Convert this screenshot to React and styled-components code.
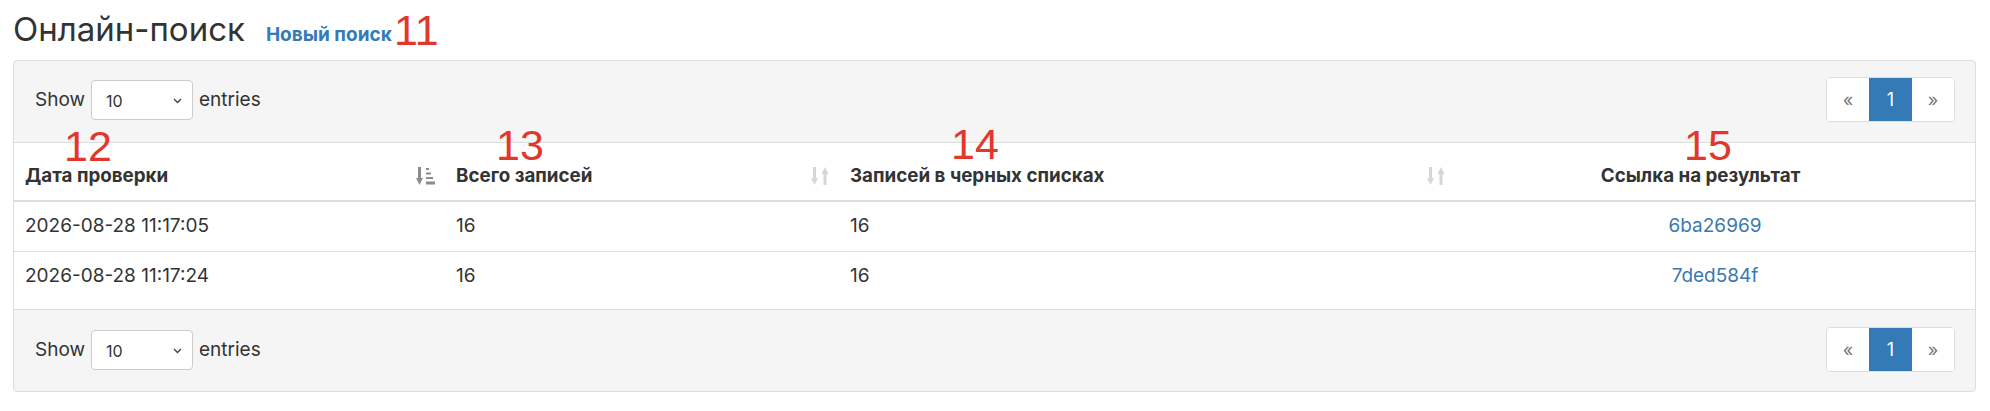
import React from "react";
import styled, { createGlobalStyle } from "styled-components";

const Global = createGlobalStyle`
  html, body { margin: 0; padding: 0; background: #fff; }
  body { font-family: Inter, "Noto Sans", sans-serif; color: #333; font-size: 19px; }
  * { box-sizing: border-box; }
`;

const Page = styled.div`
  position: relative;
  width: 1990px;
  height: 411px;
  padding: 9px 14px 0 13px;
`;

const Header = styled.div`
  display: flex;
  align-items: baseline;
  height: 40px;
  margin-bottom: 11px;
`;

const Title = styled.h1`
  margin: 0;
  font-size: 33px;
  line-height: 40px;
  font-weight: 400;
  color: #333;
`;

const NewLink = styled.a`
  margin-left: 21px;
  font-size: 19px;
  font-weight: 700;
  color: #337ab7;
  text-decoration: none;
`;

const Note = styled.span`
  position: absolute;
  left: ${(p) => p.$x}px;
  top: ${(p) => p.$y}px;
  font-family: "Liberation Sans", Arial, sans-serif;
  font-size: 43px;
  line-height: 1;
  color: #e2372b;
  pointer-events: none;
`;

const Panel = styled.div`
  border: 1px solid #ddd;
  border-radius: 4px;
  overflow: hidden;
  background: #f5f5f5;
`;

const Toolbar = styled.div`
  display: flex;
  justify-content: space-between;
  align-items: center;
  padding: ${(p) => (p.$bottom ? "17px 20px 19px 21px" : "16px 20px 20px 21px")};
  ${(p) => (p.$bottom ? "border-top: 1px solid #ddd;" : "border-bottom: 1px solid #ddd;")}
`;

const Length = styled.label`
  display: flex;
  align-items: center;
  gap: 6px;
  font-size: 19px;
  line-height: 26px;
  color: #333;
`;

const Select = styled.div`
  width: 102px;
  height: 40px;
  border: 1px solid #ccc;
  border-radius: 4px;
  background: #fff;
  display: flex;
  align-items: center;
  justify-content: space-between;
  padding: 2px 10px 0 14px;
  font-size: 16px;
  color: #333;
`;

const Pager = styled.div`
  display: flex;
  border: 1px solid #ddd;
  border-radius: 4px;
  overflow: hidden;
  background: #fff;
  height: 45px;
`;

const PageBtn = styled.span`
  width: ${(p) => (p.$active ? 43 : 42)}px;
  display: flex;
  align-items: center;
  justify-content: center;
  font-size: 18px;
  color: ${(p) => (p.$active ? "#fff" : "#777")};
  background: ${(p) => (p.$active ? "#337ab7" : "#fff")};
`;

const Body = styled.div`
  background: #fff;
  padding-bottom: 8px;
`;

const Table = styled.table`
  width: 100%;
  border-collapse: separate;
  border-spacing: 0;
  table-layout: fixed;
`;

const Th = styled.th`
  padding: 20px ${(p) => (p.$pr != null ? p.$pr : 10)}px 11px 11px;
  line-height: 26px;
  font-size: 18.8px;
  font-weight: 700;
  color: #333;
  text-align: ${(p) => p.$align || "left"};
  border-bottom: 2px solid #ddd;
  vertical-align: bottom;
`;

const ThInner = styled.div`
  display: flex;
  align-items: center;
  justify-content: space-between;
`;

const Td = styled.td`
  padding: 11px 12px 12px 11px;
  line-height: 26px;
  font-size: 19px;
  color: #333;
  text-align: ${(p) => p.$align || "left"};
  border-top: ${(p) => (p.$first ? "none" : "1px solid #ddd")};
`;

const ResultLink = styled.a`
  color: #3a78b0;
  text-decoration: none;
`;

const SortAmount = ({ color }) => (
  <svg width="19" height="18" viewBox="0 0 19 18">
    <rect x="2" y="0" width="3" height="12" fill={color} />
    <polygon points="0,11 7,11 3.5,18" fill={color} />
    <rect x="10" y="1" width="3" height="2" fill={color} />
    <rect x="10" y="5.5" width="5" height="2" fill={color} />
    <rect x="10" y="10" width="7" height="2" fill={color} />
    <rect x="10" y="14.5" width="9" height="3" fill={color} />
  </svg>
);

const SortBoth = ({ color }) => (
  <svg width="18" height="18" viewBox="0 0 18 18">
    <rect x="2" y="0" width="3" height="12" fill={color} />
    <polygon points="0,11 7,11 3.5,18" fill={color} />
    <rect x="12.5" y="6" width="3" height="12" fill={color} />
    <polygon points="10.5,7 17.5,7 14,0" fill={color} />
  </svg>
);

const Chevron = () => (
  <svg width="9" height="6" viewBox="0 0 9 6">
    <path d="M1 1 L4.5 4.5 L8 1" fill="none" stroke="#444" strokeWidth="1.4" />
  </svg>
);

const LengthControl = () => (
  <Length>
    Show
    <Select>
      <span>10</span>
      <Chevron />
    </Select>
    entries
  </Length>
);

const Pagination = () => (
  <Pager>
    <PageBtn>«</PageBtn>
    <PageBtn $active>1</PageBtn>
    <PageBtn>»</PageBtn>
  </Pager>
);

const rows = [
  { date: "2026-08-28 11:17:05", total: 16, black: 16, link: "6ba26969" },
  { date: "2026-08-28 11:17:24", total: 16, black: 16, link: "7ded584f" },
];

export default function App() {
  return (
    <>
      <Global />
      <Page>
        <Header>
          <Title>Онлайн-поиск</Title>
          <NewLink href="#">Новый поиск</NewLink>
        </Header>
        <Panel>
          <Toolbar>
            <LengthControl />
            <Pagination />
          </Toolbar>
          <Body>
            <Table>
              <colgroup>
                <col style={{ width: 431 }} />
                <col style={{ width: 394 }} />
                <col style={{ width: 616 }} />
                <col style={{ width: 521 }} />
              </colgroup>
              <thead>
                <tr>
                  <Th>
                    <ThInner>
                      <span>Дата проверки</span>
                      <SortAmount color="#8c8c8c" />
                    </ThInner>
                  </Th>
                  <Th>
                    <ThInner>
                      <span>Всего записей</span>
                      <SortBoth color="#d6d6d6" />
                    </ThInner>
                  </Th>
                  <Th>
                    <ThInner>
                      <span>Записей в черных списках</span>
                      <SortBoth color="#d6d6d6" />
                    </ThInner>
                  </Th>
                  <Th $align="center" $pr={41}>
                    Ссылка на результат
                  </Th>
                </tr>
              </thead>
              <tbody>
                {rows.map((r, i) => (
                  <tr key={r.link}>
                    <Td $first={i === 0}>{r.date}</Td>
                    <Td $first={i === 0}>{r.total}</Td>
                    <Td $first={i === 0}>{r.black}</Td>
                    <Td $first={i === 0} $align="center">
                      <ResultLink href="#">{r.link}</ResultLink>
                    </Td>
                  </tr>
                ))}
              </tbody>
            </Table>
          </Body>
          <Toolbar $bottom>
            <LengthControl />
            <Pagination />
          </Toolbar>
        </Panel>
        <Note $x={394} $y={9}>11</Note>
        <Note $x={64} $y={125}>12</Note>
        <Note $x={496} $y={124}>13</Note>
        <Note $x={951} $y={123}>14</Note>
        <Note $x={1684} $y={124}>15</Note>
      </Page>
    </>
  );
}
